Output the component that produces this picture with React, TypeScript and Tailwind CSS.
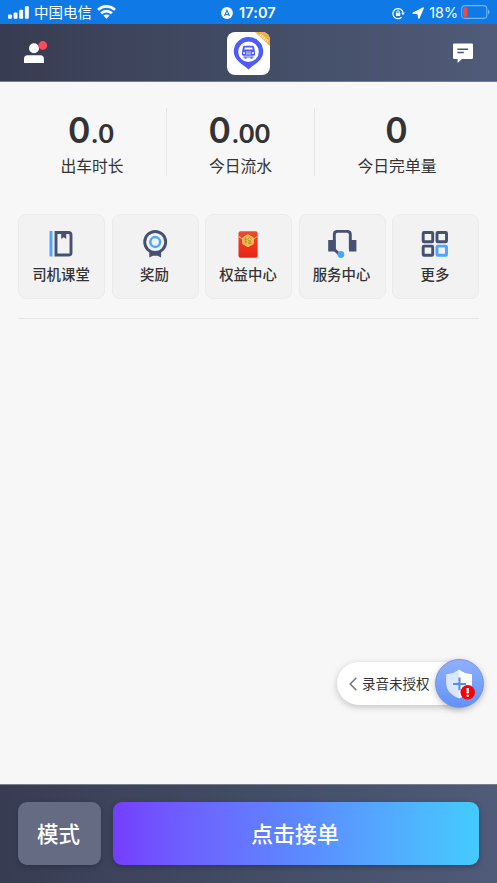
import type { ReactNode } from 'react';

const navy = '#465070';
const sky = '#4ca6ff';

function StatusBar() {
  return (
    <div className="relative flex h-6 items-center justify-between bg-[#0f7ae5] pl-2 pr-[7px] text-white">
      <div className="flex items-center">
        <svg width="21" height="13" viewBox="0 0 21 13" fill="#fff">
          <rect x="0" y="8.6" width="3.9" height="4.2" rx="1" />
          <rect x="5.6" y="6.6" width="3.9" height="6.2" rx="1" />
          <rect x="11.2" y="3.8" width="3.9" height="9" rx="1" />
          <rect x="16.9" y="0.2" width="3.9" height="12.6" rx="1" />
        </svg>
        <span className="ml-[5px] text-[14.5px] leading-6">中国电信</span>
        <svg className="ml-[5px] -mt-px" width="19" height="14" viewBox="0 0 19 14" fill="none" stroke="#fff" strokeWidth="2.7">
          <path d="M1 4.9C5.8.3 13.2.3 18 4.9" />
          <path d="M4.1 8.2c3.1-2.9 7.7-2.9 10.8 0" />
          <path d="M6.4 10.6c1.8-1.6 4.4-1.6 6.2 0L9.5 13.7z" fill="#fff" stroke="none" />
        </svg>
      </div>

      <div className="absolute left-[221px] top-0 flex h-6 items-center">
        <svg className="mt-[2px]" width="12" height="12" viewBox="0 0 12 12">
          <circle cx="6" cy="6" r="5.9" fill="#fff" />
          <path d="M6 2l3.2 7.2L6 7.8 2.8 9.2z" fill="#0f7ae5" />
          <path d="M6 4.6l1 2.4H5z" fill="#fff" />
        </svg>
        <span className="ml-[6px] mt-[2px] font-['Inter'] text-[14.5px] font-semibold leading-6 tracking-[0.1px]">17:07</span>
      </div>

      <div className="flex items-center">
        <svg className="mt-[2px]" width="13" height="13" viewBox="0 0 13 13" fill="none" stroke="#fff" strokeWidth="1.2">
          <path d="M9.6 10.3A5.1 5.1 0 1 1 11.1 6" />
          <path d="M9.300 5.800h3.600L11 8.200z" fill="#fff" stroke="none" />
          <rect x="3.900" y="5.700" width="4.300" height="3.400" rx=".5" fill="#fff" stroke="none" />
          <path d="M4.800 6V4.900a1.250 1.250 0 0 1 2.500 0V6" strokeWidth=".9" />
        </svg>
        <svg className="ml-[7px] mt-px" width="12" height="12" viewBox="0 0 12 12" fill="#fff" stroke="#fff" strokeWidth="1.200" strokeLinejoin="round">
          <path d="M.9 6.200L11.300.9 6.900 11.300 6 6.600z" />
        </svg>
        <span className="ml-[5px] mt-[2px] font-['Inter'] text-[14.300px] leading-6">18%</span>
        <svg className="ml-[3px]" width="29" height="14" viewBox="0 0 29 14">
          <rect x=".6" y=".6" width="25.200" height="12.800" rx="3.200" fill="none" stroke="#77b3f1" strokeWidth="1.100" />
          <rect x="2.200" y="2.200" width="4.300" height="9.600" rx="1.400" fill="#fb4540" />
          <path d="M27 4.600c2 .8 2 4 0 4.800z" fill="#77b3f1" />
        </svg>
      </div>
    </div>
  );
}

function AppLogo() {
  return (
    <svg className="mt-px" width="43" height="43" viewBox="0 0 43 43">
      <defs>
        <clipPath id="tile">
          <rect width="43" height="43" rx="8" />
        </clipPath>
      </defs>
      <g clipPath="url(#tile)">
        <rect width="43" height="43" fill="#fff" />
        <path d="M28 0h15v14z" fill="#eeb046" />
        <path d="M33 2.500l8 7" stroke="#fbe3ae" strokeWidth="2.600" strokeDasharray="1.600 .8" />
        <path d="M21.500 37.500C17 33 6.800 28.500 6.800 19.700a14.700 14.700 0 0 1 29.400 0C36.200 28.500 26 33 21.500 37.500z" fill="#4d5bf8" />
        <circle cx="21.500" cy="19.700" r="10.300" fill="#fff" />
        <path d="M17.500 13.800h8q1.500 0 1.700 1.500l.6 3.700h-12.600l.6-3.700q.2-1.500 1.700-1.500z" fill="#4d5bf8" />
        <path d="M17.800 15.400h7.500l.4 2H17.300z" fill="#fff" />
        <rect x="15" y="18.400" width="13" height="5.400" rx="1.600" fill="#4d5bf8" />
        <path d="M18.800 20h5.400M18.800 21.900h5.400" stroke="#fff" strokeWidth=".8" />
        <circle cx="17" cy="21" r="1" fill="#fff" />
        <circle cx="26" cy="21" r="1" fill="#fff" />
        <path d="M16.500 25h10" stroke="#4d5bf8" strokeWidth="1.200" />
        <path d="M17.500 26h2M23.500 26h2" stroke="#4d5bf8" strokeWidth="1.600" />
      </g>
    </svg>
  );
}

function Header() {
  return (
    <header className="flex h-[58px] items-center justify-between border-b border-[#777c8c] bg-linear-to-r from-[#383c52] via-[#424c65] to-[#505b79] px-6">
      {/* profile with unread dot */}
      <svg width="24" height="24" viewBox="0 0 24 24">
        <circle cx="10" cy="7.300" r="5" fill="#fff" />
        <path d="M0 22v-4q0-3.700 3.600-3.700h12.700q3.600 0 3.600 3.700v4z" fill="#fff" />
        <circle cx="18.800" cy="4.500" r="4.400" fill="#fe4b57" />
      </svg>
      <AppLogo />
      <svg width="24" height="20" viewBox="0 0 24 20">
        <path d="M5.200.5h17.600q1.200 0 1.200 1.200v13.100q0 1.200-1.200 1.200H13l-4.400 4v-4H5.200Q4 16 4 14.800V1.700Q4 .5 5.200.5z" fill="#fff" />
        <path d="M8.400 6.200h10.700M8.400 9.500h6.400" stroke="#4a546f" strokeWidth="1.500" />
      </svg>
    </header>
  );
}

interface StatProps {
  value: string;
  decimals?: string;
  label: string;
}

function Stat({ value, decimals, label }: StatProps) {
  return (
    <div className="flex h-[68px] flex-col items-center">
      <div className="mt-[2px] -ml-px flex h-[38px] items-baseline font-['Lato'] text-[36px] font-bold leading-[38px] text-[#333]">
        <span>{value}</span>
        {decimals && <span className="ml-[2px] text-[26.500px] tracking-[0.500px]">{decimals}</span>}
      </div>
      <p className="mt-[6px] text-[15.800px] leading-6 text-[#333]">{label}</p>
    </div>
  );
}

function BookIcon() {
  return (
    <svg width="28" height="28" viewBox="0 0 28 28">
      <rect x="2.500" y="1" width="3" height="25.500" fill={sky} />
      <path d="M9 2.500h12.500q2.500 0 2.500 2.500v18q0 2-2.500 2H9z" fill="none" stroke={navy} strokeWidth="2.900" />
      <path d="M14.200 3h5v6l-2.500-1.800L14.200 9z" fill={navy} />
    </svg>
  );
}

function MedalIcon() {
  return (
    <svg width="28" height="28" viewBox="0 0 28 28">
      <path d="M8.300 20h11.800v7.500l-3.600-1.800h-4.600l-3.600 1.800z" fill={navy} />
      <circle cx="14.200" cy="12" r="10.500" fill="#f2f2f2" stroke={navy} strokeWidth="2.900" />
      <circle cx="14.200" cy="12" r="4.900" fill="none" stroke={sky} strokeWidth="2.500" />
    </svg>
  );
}

function RedPacketIcon() {
  return (
    <svg width="28" height="28" viewBox="0 0 28 28">
      <defs>
        <linearGradient id="packet" x1="0" y1="0" x2="0" y2="1">
          <stop offset="0" stopColor="#f04a30" />
          <stop offset=".35" stopColor="#f8381f" />
          <stop offset="1" stopColor="#e12818" />
        </linearGradient>
      </defs>
      <rect x="4.500" y="1.200" width="19.200" height="26.500" rx="2" fill="url(#packet)" />
      <path d="M4.500 6.500l9.500 5.500 9.500-5.500" fill="none" stroke="#f3b25a" strokeWidth="1.100" />
      <path d="M14 4.700l5.300 3v6.100l-5.300 3-5.300-3V7.700z" fill="#e9bc50" stroke="#f3cf74" strokeWidth=".8" />
      <path d="M11.700 7.500v6M10.500 9.300h2.400M10.500 12l2.400-.8M13.500 9.500l2-2 2 2M14 10.500h2.600v1.700h-2v1.300h3" fill="none" stroke="#c4831c" strokeWidth=".8" />
    </svg>
  );
}

function HeadsetIcon() {
  return (
    <svg width="30" height="28" viewBox="0 0 30 28">
      <path d="M7.300 19V4.500q0-3.100 3.200-3.100h9.600q3.200 0 3.200 3.100V19" fill="none" stroke={navy} strokeWidth="2.900" />
      <path d="M7.300 19.500l5.500 5.200" stroke={navy} strokeWidth="2.900" />
      <rect x="1.200" y="10" width="7.400" height="11.500" fill={navy} />
      <rect x="22" y="10" width="7.400" height="11.500" fill={navy} />
      <circle cx="13.900" cy="24.500" r="3.400" fill={sky} />
    </svg>
  );
}

function MoreIcon() {
  return (
    <svg width="28" height="28" viewBox="0 0 28 28" fill="none" stroke={navy} strokeWidth="2.900">
      <rect x="2.200" y="2.500" width="9.500" height="9.200" rx=".8" />
      <rect x="16" y="2.500" width="9.500" height="9.200" rx=".8" />
      <rect x="2.200" y="16.100" width="9.500" height="9.200" rx=".8" />
      <rect x="16" y="16.100" width="9.500" height="9.200" rx=".8" stroke={sky} />
    </svg>
  );
}

const shortcuts: { label: string; icon: ReactNode }[] = [
  { label: '司机课堂', icon: <BookIcon /> },
  { label: '奖励', icon: <MedalIcon /> },
  { label: '权益中心', icon: <RedPacketIcon /> },
  { label: '服务中心', icon: <HeadsetIcon /> },
  { label: '更多', icon: <MoreIcon /> },
];

function RecordingBadge() {
  return (
    <div className="absolute right-[13px] top-[659px] flex h-[49px] w-[147px] items-center">
      <div className="flex h-[43px] w-[125px] items-center rounded-l-full bg-white pl-[12px] shadow-[0_2px_7px_rgba(0,0,0,0.22)]">
        <svg width="8" height="14" viewBox="0 0 8 14" fill="none" stroke="#777" strokeWidth="1.500">
          <path d="M7.300.7L1.200 7l6.100 6.300" />
        </svg>
        <span className="-mt-[2px] ml-[5px] whitespace-nowrap text-[13.500px] leading-5 text-[#333]">录音未授权</span>
      </div>
      <div className="absolute right-0 top-0 flex h-[49px] w-[49px] items-center justify-center rounded-full border border-[#6f90dc] bg-linear-to-b from-[#90b0fd] to-[#6292f8] shadow-[0_2px_6px_rgba(0,0,0,0.25)]">
        <svg width="30" height="32" viewBox="0 0 30 32">
          <path d="M14 1.500Q20 6 27 6.200V16q0 9-13 14.500z" fill="#fff" />
          <path d="M14 1.500Q8 6 1.200 6.200V16q0 9 12.800 14.500z" fill="#dce7fe" />
          <path d="M14.500 9.500v12.800M8 16h13" stroke="#528cf5" strokeWidth="2.100" />
          <circle cx="22.700" cy="24.300" r="7.200" fill="#fb0007" />
          <path d="M22.700 20v5.300" stroke="#fff" strokeWidth="2.400" />
          <circle cx="22.700" cy="27.700" r="1.300" fill="#fff" />
        </svg>
      </div>
    </div>
  );
}

export default function App() {
  return (
    <div className="relative flex h-[883px] w-[497px] flex-col overflow-hidden bg-[#f7f7f7] font-['Noto_Sans_CJK_SC',sans-serif]">
      <StatusBar />
      <Header />

      <main className="flex-1 px-[18px]">
        <section className="mt-[26px] grid grid-cols-[149px_148px_164px] divide-x divide-[#e6e6e6]">
          <Stat value="0" decimals=".0" label="出车时长" />
          <Stat value="0" decimals=".00" label="今日流水" />
          <Stat value="0" label="今日完单量" />
        </section>

        <nav className="mt-[38px] grid grid-cols-5 gap-[6.500px] border-b border-[#e6e6e6] pb-[19px]">
          {shortcuts.map((item) => (
            <button
              key={item.label}
              className="flex h-[85px] flex-col items-center rounded-lg border border-[#ebebeb] bg-[#f2f2f2] pr-px pt-[15px]"
            >
              {item.icon}
              <span className="mt-[5px] text-[14.400px] font-medium leading-[22px] text-[#333]">{item.label}</span>
            </button>
          ))}
        </nav>
      </main>

      <RecordingBadge />

      <footer className="flex h-[99px] gap-3 border-t border-[#7b8090] bg-linear-to-r from-[#383c52] via-[#424c65] to-[#505b79] px-[18px] pt-[17px]">
        <button className="h-[63px] w-[83px] rounded-[9px] bg-[#646b83] pb-px pr-[2px] text-[21.500px] font-medium text-white shadow-[0_2px_5px_rgba(20,25,50,0.35)]">
          模式
        </button>
        <button className="h-[63px] flex-1 rounded-[9px] bg-linear-to-r from-[#743dff] via-[#5c87ff] to-[#43cbfe] pb-[3px] pr-[2px] text-[22px] font-medium text-white shadow-[0_2px_5px_rgba(20,25,50,0.35)]">
          点击接单
        </button>
      </footer>
    </div>
  );
}
